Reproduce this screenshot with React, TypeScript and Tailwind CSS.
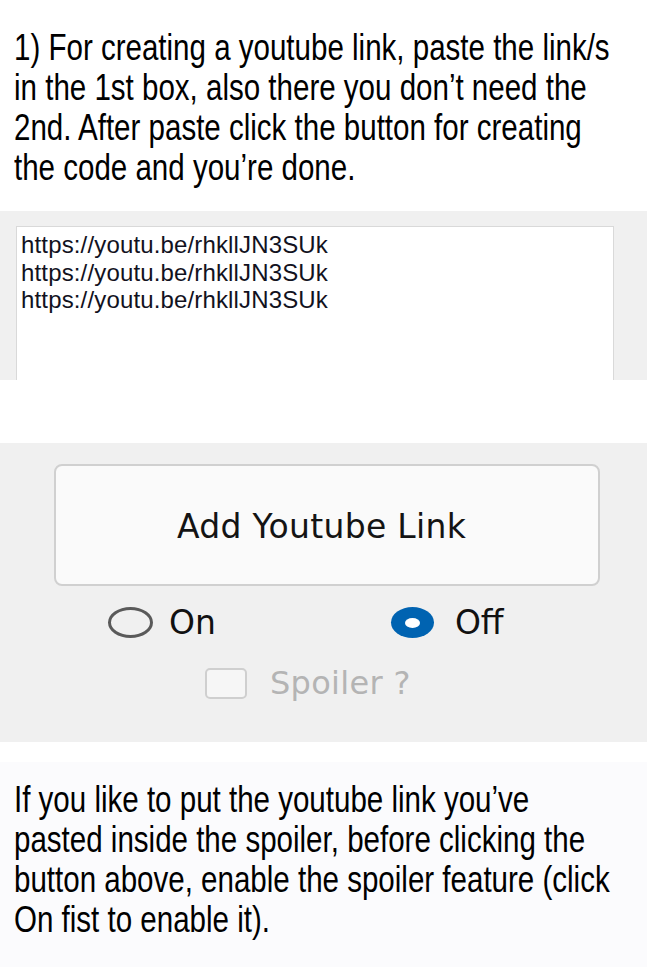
export default function App() {
  const links = ["https://youtu.be/rhkllJN3SUk", "https://youtu.be/rhkllJN3SUk", "https://youtu.be/rhkllJN3SUk"];

  return (
    <div className="w-[647px] min-h-[967px] bg-white">
      {/* intro */}
      <section className="h-[211px] overflow-hidden bg-white pl-[14px] pt-[28px]">
        <p className="w-[740px] origin-left scale-x-[0.82] font-['Liberation_Sans',Arial,sans-serif] text-[36px] leading-[40px] text-black">
          1) For creating a youtube link, paste the link/s
          <br />
          in the 1st box, also there you don’t need the
          <br />
          2nd. After paste click the button for creating
          <br />
          the code and you’re done.
        </p>
      </section>

      {/* link box (cropped) */}
      <section className="h-[169px] overflow-hidden bg-[#f0f0f0] pl-[16px] pr-[33px] pt-[15px]">
        <div className="h-[200px] border border-[#d9d9d9] bg-white px-[4px] pt-[4px] font-['Liberation_Sans',Arial,sans-serif] text-[24px] leading-[27.5px] tracking-[0.15px] text-[#12121e]">
          {links.map((l, i) => (
            <div key={i}>{l}</div>
          ))}
        </div>
      </section>

      <div className="h-[63px] bg-white" />

      {/* button + options */}
      <section className="h-[299px] bg-[#f0f0f0] pt-[21px] font-['DejaVu_Sans',sans-serif]">
        <div className="ml-[54px] mr-[47px] flex h-[122px] items-center justify-center rounded-[8px] border-2 border-[#d0d0d0] bg-[#fafafa] pr-[11px] pt-[4px] text-[33px] tracking-[0.3px] text-[#141414]">
          Add Youtube Link
        </div>

        <div className="mt-[21px] flex h-[31px] items-center">
          <div className="ml-[108px] flex items-center">
            <span className="h-[31px] w-[45px] rounded-[50%] border-[3px] border-[#5a5a5a] bg-[#f0f0f0]" />
            <span className="ml-[16px] text-[33px] leading-none text-[#111]">On</span>
          </div>
          <div className="ml-[175px] flex items-center">
            <span className="flex h-[31px] w-[43px] items-center justify-center rounded-[50%] bg-[#0063b1]">
              <span className="h-[10px] w-[15px] rounded-[50%] bg-white" />
            </span>
            <span className="ml-[21px] text-[33px] leading-none text-[#111]">Off</span>
          </div>
        </div>

        <div className="mt-[29px] flex items-center pl-[205px]">
          <span className="h-[31px] w-[42px] rounded-[5px] border-2 border-[#cfcfcf] bg-[#f6f6f6]" />
          <span className="ml-[23px] text-[32px] leading-none tracking-[0.3px] text-[#b4b4b4]">Spoiler ?</span>
        </div>
      </section>

      <div className="h-[20px] bg-white" />

      {/* note */}
      <section className="h-[205px] overflow-hidden bg-[#fbfbfd] pl-[14px] pt-[18px]">
        <p className="w-[740px] origin-left scale-x-[0.82] font-['Liberation_Sans',Arial,sans-serif] text-[36px] leading-[40px] text-black">
          If you like to put the youtube link you’ve
          <br />
          pasted inside the spoiler, before clicking the
          <br />
          button above, enable the spoiler feature (click
          <br />
          On fist to enable it).
        </p>
      </section>
    </div>
  );
}
